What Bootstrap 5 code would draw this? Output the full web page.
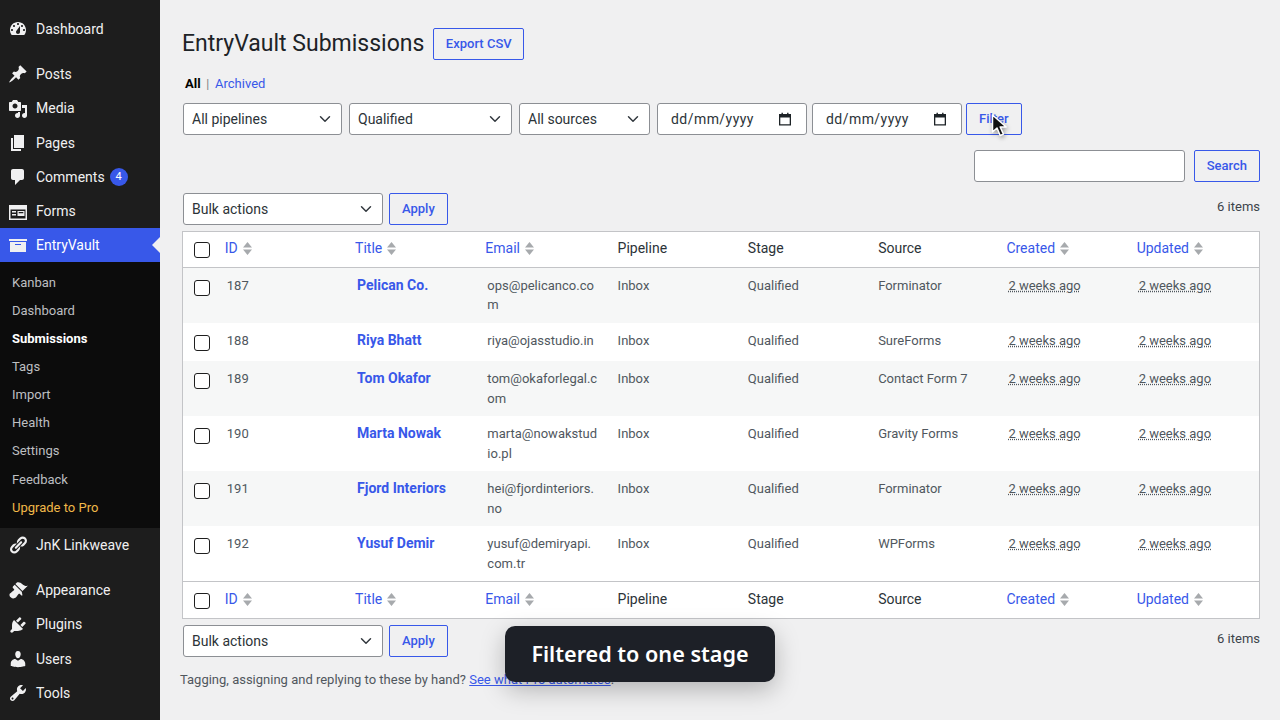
<!DOCTYPE html>
<html lang="en">
<head>
<meta charset="utf-8">
<title>EntryVault Submissions</title>
<link href="https://cdn.jsdelivr.net/npm/bootstrap@5.3.0/dist/css/bootstrap.min.css" rel="stylesheet">
<style>
html,body{height:720px;overflow:hidden}
body{background:#f0f0f1;font-family:Roboto,"Liberation Sans",sans-serif;font-size:13px;color:#3c434a}
.shell{height:720px}
.side{width:160px;flex:none;background:#1d1d1d;color:#f0f0f1;font-size:14px;padding-top:12px;height:720px;overflow:hidden}
.side ul{margin:0;padding:0;list-style:none}
.mitem{height:34.3px;display:flex;align-items:center;color:#f0f0f1;text-decoration:none;position:relative}
.mitem svg{width:20px;height:20px;margin:0 8px;flex:none;fill:#f0f0f1}
.mgap{margin-top:11px}
.mitem.on{background:#3858e9;color:#fff;height:34px;margin-top:-.5px}
.mitem.on::after{content:"";position:absolute;right:0;top:9px;border:8px solid transparent;border-right-color:#f0f0f1;border-left:0}
.cnt{display:inline-block;width:18px;height:18px;line-height:18px;border-radius:50%;background:#3858e9;color:#fff;font-size:11px;text-align:center;margin-left:5px}
.subm{background:#0c0c0c;padding:6.4px 0 6.2px}
.subm a{display:block;height:28.125px;line-height:28.125px;padding-left:12px;font-size:13px;color:#bdbfc1;text-decoration:none}
.subm a.cur{color:#fff;font-weight:700}
.subm a.pro{color:#f0b849}
.vault-main{padding:28px 20px 0;min-width:0}
.head-row{height:32px;margin-left:2px;gap:9px}
.head-row h1{font-size:23px;font-weight:400;margin:0;color:#1d2327;line-height:32px}
.vbtn{height:32px;padding:0 12px;font-size:13px;font-weight:500;color:#3858e9;border:1px solid #3858e9;background:transparent;border-radius:2px;line-height:30px;--bs-btn-hover-color:#3858e9}
.head-row .vbtn{padding:0 11.5px}
.sublinks{margin:14px 0 0 5px;height:20px;line-height:20px;color:#787c82}
.sublinks b{color:#000;font-weight:700}
.sublinks a{color:#3858e9;text-decoration:none}
.sublinks i{font-style:normal;margin:0 2.500px;font-size:12px}
.filters{margin:9px 0 0 3px;height:32px}
.vsel{height:32px;padding:0 24px 0 8px;font-size:14px;color:#2c3338;border:1px solid #8c8f94;border-radius:3px;background-color:#fff;background-position:right 9px center;background-size:14px 12px;line-height:30px}
.w-a{width:159px;margin-right:7px}
.w-b{width:163px;margin-right:7px}
.w-c{width:131px;margin-right:7px}
.vdate{width:150px;height:32px;background:#fff;border:1px solid #8c8f94;border-radius:3px;padding:0 14px 0 13px;color:#2c3338;font-size:14px;letter-spacing:.45px}
.vdate svg{width:14px;height:14px;fill:#1d2327}
.d1{margin-right:5px}
.d2{margin-right:4px}
.searchrow{margin-top:15px;height:32px}
.vinput{width:211px;height:32px;background:#fff;border:1px solid #8c8f94;border-radius:3px;margin-right:9px}
.bulkrow{margin:11px 0 0 3px;height:32px;gap:6px}
.bulkrow.lowrow{margin-top:6px}
.w-d{width:200px}
.count{padding-top:4px;line-height:20px;color:#3c434a}
.tablewrap{margin:6px 0 0 2px;width:1078px;border:1px solid #c3c4c7;background:#fff}
.vault-table{--bs-table-bg:#fff;--bs-table-color:#50575e;--bs-table-striped-bg:#f6f7f7;--bs-table-striped-color:#50575e;--bs-table-border-color:transparent;table-layout:fixed;width:1076px;margin:0;font-size:13px;line-height:19.5px}
.vault-table>:not(caption)>*>*{padding:8px 10px;border:0;vertical-align:top;overflow-wrap:break-word}
.vault-table thead th,.vault-table tfoot th{font-size:14px;font-weight:400;color:#2c3338;line-height:20px}
.vault-table>thead>tr>th{height:35px;padding-top:6px;padding-bottom:6px}
.vault-table>tfoot>tr>th{height:36.5px;padding-top:7px;padding-bottom:7.5px}
.vault-table thead th{border-bottom:1px solid #c3c4c7}
.vault-table tfoot th{border-top:1px solid #c3c4c7}
.vault-table>:not(caption)>*>th.sortcol{padding-left:8px;padding-right:8px}
.sortlink{color:#3858e9;text-decoration:none;display:inline-flex;align-items:center;gap:5px}
.sortlink svg{width:9px;height:13px;fill:#a7aaad;margin-top:1px}
.vault-table .chk{width:33.8px;padding:0 !important}
.vbox{display:block;width:16px;height:16px;margin:11.5px 0 0 11px;border:1px solid #1e1e1e;border-radius:3px;background:#fff;appearance:none}
tbody tr:nth-child(-n+2) .vbox{margin-top:12px}
tfoot .vbox{margin-top:11px}
thead .vbox{margin-top:10px}
.rname{font-size:14px;font-weight:700;color:#3858e9;text-decoration:none;line-height:19px}
.vault-table tbody td{color:#50575e}
.rowshort{height:38.5px}
abbr.stamp{color:#50575e;text-decoration:underline dotted;text-underline-offset:1px;cursor:default}
.note{margin-top:13px;line-height:19px;color:#50575e;margin-bottom:0}
.note a{color:#3858e9}
.vtoast{position:absolute;left:505px;top:626px;width:270px;height:56px;padding-top:1px;background:#1d2027;border-radius:10px;color:#fff;font-family:"Noto Sans",sans-serif;font-size:21.6px;font-weight:600;box-shadow:0 8px 24px rgba(0,0,0,.25)}
.vcursor{position:absolute;left:988px;top:110px;width:24px;height:30px;filter:drop-shadow(1px 2px 2px rgba(0,0,0,.35))}
</style>
</head>
<body>
<div class="d-flex shell">
  <aside class="side">
    <ul>
      <li><a class="mitem" href="#"><svg viewBox="0 0 20 20"><path fill-rule="evenodd" d="M3.76 16h12.48c1.1-1.37 1.76-3.11 1.76-5 0-4.42-3.58-8-8-8s-8 3.58-8 8c0 1.89.66 3.63 1.76 5zM10 4c.55 0 1 .45 1 1s-.45 1-1 1-1-.45-1-1 .45-1 1-1zM6 6c.55 0 1 .45 1 1s-.45 1-1 1-1-.45-1-1 .45-1 1-1zm8 0c.55 0 1 .45 1 1s-.45 1-1 1-1-.45-1-1 .45-1 1-1zm-5.37 5.55L12 7v6c0 1.1-.9 2-2 2s-2-.9-2-2c0-.57.24-1.08.63-1.45zM4 10c.55 0 1 .45 1 1s-.45 1-1 1-1-.45-1-1 .45-1 1-1zm12 0c.55 0 1 .45 1 1s-.45 1-1 1-1-.45-1-1 .45-1 1-1z"/></svg>Dashboard</a></li>
      <li class="mgap"><a class="mitem" href="#"><svg viewBox="0 0 20 20"><path d="M10.44 3.02l1.82-1.82 6.36 6.35-1.83 1.82c-1.05-.68-2.48-.57-3.41.36l-.75.75c-.92.93-1.04 2.35-.35 3.41l-1.83 1.82-2.41-2.41-2.8 2.79c-.42.42-3.38 2.71-3.8 2.29s1.86-3.39 2.28-3.81l2.79-2.79L4.1 9.36l1.83-1.82c1.05.69 2.48.57 3.4-.36l.75-.75c.93-.92 1.05-2.35.36-3.41z"/></svg>Posts</a></li>
      <li><a class="mitem" href="#"><svg viewBox="0 0 20 20"><path d="M13 11V4c0-.55-.45-1-1-1h-1.67L9 1H5L3.67 3H2c-.55 0-1 .45-1 1v7c0 .55.45 1 1 1h10c.55 0 1-.45 1-1zM7 4.5c1.38 0 2.5 1.12 2.5 2.5S8.38 9.5 7 9.5 4.5 8.38 4.5 7 5.62 4.5 7 4.5zM14 6h5v10.5c0 1.38-1.12 2.5-2.5 2.5S14 17.88 14 16.5s1.12-2.5 2.5-2.5c.17 0 .34.02.5.05V9h-3V6zm-4 8.05V13h2v3.5c0 1.38-1.12 2.5-2.5 2.5S7 17.88 7 16.5 8.12 14 9.5 14c.17 0 .34.02.5.05z" fill-rule="evenodd"/></svg>Media</a></li>
      <li><a class="mitem" href="#"><svg viewBox="0 0 20 20"><path d="M6 15V2h10v13H6zm-1 1h8v2H3V5h2v11z"/></svg>Pages</a></li>
      <li><a class="mitem" href="#"><svg viewBox="0 0 20 20"><path d="M5 2h9c1.1 0 2 .9 2 2v7c0 1.1-.9 2-2 2h-2l-5 5v-5H5c-1.1 0-2-.9-2-2V4c0-1.1.9-2 2-2z"/></svg>Comments<span class="cnt">4</span></a></li>
      <li><a class="mitem" href="#"><svg viewBox="0 0 20 20"><path fill-rule="evenodd" d="M1 3h18v15H1V3zm1.5 4.500v9h15v-9h-15zM4 9h4v1.400H4V9zm0 3h4v1.400H4V12zm5.500-3h7v5h-7V9zm1.200 1.100v1.100h4.600v-1.100h-4.600z"/></svg>Forms</a></li>
      <li><a class="mitem on" href="#"><svg viewBox="0 0 20 20"><path fill-rule="evenodd" d="M19 4v2H1V4h18zM2 7h16v10H2V7zm11 3V9H7v1h6z"/></svg>EntryVault</a>
        <div class="subm">
          <a href="#">Kanban</a><a href="#">Dashboard</a><a href="#" class="cur">Submissions</a><a href="#">Tags</a><a href="#">Import</a><a href="#">Health</a><a href="#">Settings</a><a href="#">Feedback</a><a href="#" class="pro">Upgrade to Pro</a>
        </div>
      </li>
      <li><a class="mitem" href="#"><svg viewBox="0 0 20 20"><path d="M17.74 2.76c1.68 1.69 1.68 4.41 0 6.1l-1.53 1.52c-1.12 1.12-2.7 1.47-4.14 1.09l2.62-2.61.76-.77.76-.76c.84-.84.84-2.2 0-3.04-.84-.85-2.2-.85-3.04 0l-.77.76-3.38 3.38c-.37-1.44-.02-3.02 1.1-4.14l1.52-1.53c1.69-1.68 4.42-1.68 6.1 0zM8.59 13.43l5.34-5.34c.42-.42.42-1.1 0-1.52-.44-.43-1.13-.39-1.53 0l-5.33 5.34c-.42.42-.42 1.1 0 1.52.44.43 1.13.39 1.52 0zm-.76 2.29l4.14-4.15c.38 1.44.03 3.02-1.09 4.14l-1.52 1.53c-1.69 1.68-4.41 1.68-6.1 0-1.68-1.68-1.68-4.42 0-6.1l1.53-1.52c1.12-1.12 2.7-1.47 4.14-1.1l-4.14 4.15c-.85.84-.85 2.2 0 3.05.84.84 2.2.84 3.04 0z"/></svg>JnK Linkweave</a></li>
      <li class="mgap"><a class="mitem" href="#"><svg viewBox="0 0 20 20"><path d="M14.48 11.06L7.41 3.99l1.5-1.5c.5-.56 2.3-.47 3.51.32 1.21.8 1.43 1.28 2.91 2.1 1.18.64 2.45 1.26 4.45.85zm-.71.71L6.7 4.7 4.93 6.47c-.39.39-.39 1.02 0 1.41l1.06 1.06c.39.39.39 1.03 0 1.42-.6.6-1.43 1.11-2.21 1.69-.35.26-.7.53-1.01.84C1.43 13.23.78 15.3 2.7 17.3c1.94 1.91 4 1.25 5.34.01.31-.31.59-.65.84-1.01.58-.78 1.09-1.61 1.69-2.21.39-.39 1.02-.39 1.41 0l1.06 1.06c.39.39 1.02.39 1.41 0z"/></svg>Appearance</a></li>
      <li><a class="mitem" href="#"><svg viewBox="0 0 20 20"><path d="M13.11 4.36L9.87 7.6 8 5.73l3.24-3.24c.35-.34 1.05-.2 1.56.32.52.51.66 1.21.31 1.55zm-8 1.77l.91-1.12 9.01 9.01-1.19.84c-.71.71-2.63 1.16-3.82 1.16H6.14L4.9 17.26c-.59.59-1.54.59-2.12 0-.59-.58-.59-1.53 0-2.12l1.24-1.24v-3.88c0-1.13.4-3.19 1.09-3.89zm7.26 3.97l3.24-3.24c.34-.35 1.04-.21 1.55.31.52.51.66 1.21.31 1.55l-3.24 3.25z"/></svg>Plugins</a></li>
      <li><a class="mitem" href="#"><svg viewBox="0 0 20 20"><path d="M10 9.25c-2.27 0-2.73-3.44-2.73-3.44C7 4.02 7.82 2 9.97 2c2.16 0 2.98 2.02 2.71 3.81 0 0-.41 3.44-2.68 3.44zm0 2.57L12.72 10c2.39 0 4.52 2.33 4.52 4.53v2.49s-3.65 1.13-7.24 1.13c-3.65 0-7.24-1.13-7.24-1.13v-2.49c0-2.25 1.94-4.48 4.47-4.48z"/></svg>Users</a></li>
      <li><a class="mitem" href="#"><svg viewBox="0 0 20 20"><path d="M16.68 9.77c-1.34 1.34-3.3 1.67-4.95.99l-5.41 6.52c-.99.99-2.59.99-3.58 0s-.99-2.59 0-3.57l6.52-5.42c-.68-1.65-.35-3.61.99-4.95 1.28-1.28 3.12-1.62 4.72-1.06l-2.89 2.89 2.82 2.82 2.86-2.87c.53 1.58.18 3.39-1.08 4.65zM3.81 16.21c.4.39 1.04.39 1.43 0 .4-.4.4-1.04 0-1.43-.39-.4-1.03-.4-1.43 0-.39.39-.39 1.03 0 1.43z" fill-rule="evenodd"/></svg>Tools</a></li>
    </ul>
  </aside>

  <main class="vault-main flex-grow-1">
    <div class="d-flex align-items-center head-row">
      <h1>EntryVault Submissions</h1>
      <a class="btn vbtn" href="#">Export CSV</a>
    </div>
    <div class="sublinks"><b>All</b> <i>|</i> <a href="#">Archived</a></div>
    <div class="d-flex filters">
      <select class="form-select vsel w-a"><option>All pipelines</option></select>
      <select class="form-select vsel w-b"><option>Qualified</option></select>
      <select class="form-select vsel w-c"><option>All sources</option></select>
      <div class="vdate d1 d-flex align-items-center justify-content-between"><span>dd/mm/yyyy</span><svg viewBox="0 0 14 14"><path fill-rule="evenodd" d="M1 2h2.500V.8h1.400V2h4.200V.8h1.400V2H13v11.500H1V2zm1.300 3.400v6.800h9.400V5.400H2.300z"/></svg></div>
      <div class="vdate d2 d-flex align-items-center justify-content-between"><span>dd/mm/yyyy</span><svg viewBox="0 0 14 14"><path fill-rule="evenodd" d="M1 2h2.500V.8h1.400V2h4.200V.8h1.400V2H13v11.500H1V2zm1.300 3.400v6.800h9.400V5.400H2.300z"/></svg></div>
      <button class="btn vbtn" type="button">Filter</button>
    </div>
    <div class="d-flex justify-content-end searchrow">
      <div class="vinput"></div>
      <button class="btn vbtn" type="button">Search</button>
    </div>
    <div class="d-flex justify-content-between bulkrow">
      <div class="d-flex bulkrow mt-0 ms-0">
        <select class="form-select vsel w-d"><option>Bulk actions</option></select>
        <button class="btn vbtn" type="button">Apply</button>
      </div>
      <div class="count">6 items</div>
    </div>
    <div class="tablewrap">
      <table class="table table-striped vault-table">
        <thead>
          <tr>
            <th class="chk"><input class="vbox" type="checkbox" aria-label="Select all"></th>
            <th class="sortcol"><a class="sortlink" href="#">ID <svg viewBox="0 0 9 13"><path d="M4.500 0L9 5.500H0zM0 7.500h9L4.500 13z"/></svg></a></th>
            <th class="sortcol"><a class="sortlink" href="#">Title <svg viewBox="0 0 9 13"><path d="M4.500 0L9 5.500H0zM0 7.500h9L4.500 13z"/></svg></a></th>
            <th class="sortcol"><a class="sortlink" href="#">Email <svg viewBox="0 0 9 13"><path d="M4.500 0L9 5.500H0zM0 7.500h9L4.500 13z"/></svg></a></th>
            <th>Pipeline</th><th>Stage</th><th>Source</th>
            <th class="sortcol"><a class="sortlink" href="#">Created <svg viewBox="0 0 9 13"><path d="M4.500 0L9 5.500H0zM0 7.500h9L4.500 13z"/></svg></a></th>
            <th class="sortcol"><a class="sortlink" href="#">Updated <svg viewBox="0 0 9 13"><path d="M4.500 0L9 5.500H0zM0 7.500h9L4.500 13z"/></svg></a></th>
          </tr>
        </thead>
        <tbody>
          <tr><td class="chk"><input class="vbox" type="checkbox" aria-label="Select"></td><td>187</td><td><a class="rname" href="#">Pelican Co.</a></td><td>ops@pelicanco.com</td><td>Inbox</td><td>Qualified</td><td>Forminator</td><td><abbr class="stamp">2 weeks ago</abbr></td><td><abbr class="stamp">2 weeks ago</abbr></td></tr>
          <tr class="rowshort"><td class="chk"><input class="vbox" type="checkbox" aria-label="Select"></td><td>188</td><td><a class="rname" href="#">Riya Bhatt</a></td><td>riya@ojasstudio.in</td><td>Inbox</td><td>Qualified</td><td>SureForms</td><td><abbr class="stamp">2 weeks ago</abbr></td><td><abbr class="stamp">2 weeks ago</abbr></td></tr>
          <tr><td class="chk"><input class="vbox" type="checkbox" aria-label="Select"></td><td>189</td><td><a class="rname" href="#">Tom Okafor</a></td><td>tom@okaforlegal.com</td><td>Inbox</td><td>Qualified</td><td>Contact Form 7</td><td><abbr class="stamp">2 weeks ago</abbr></td><td><abbr class="stamp">2 weeks ago</abbr></td></tr>
          <tr><td class="chk"><input class="vbox" type="checkbox" aria-label="Select"></td><td>190</td><td><a class="rname" href="#">Marta Nowak</a></td><td>marta@nowakstudio.pl</td><td>Inbox</td><td>Qualified</td><td>Gravity Forms</td><td><abbr class="stamp">2 weeks ago</abbr></td><td><abbr class="stamp">2 weeks ago</abbr></td></tr>
          <tr><td class="chk"><input class="vbox" type="checkbox" aria-label="Select"></td><td>191</td><td><a class="rname" href="#">Fjord Interiors</a></td><td>hei@fjordinteriors.no</td><td>Inbox</td><td>Qualified</td><td>Forminator</td><td><abbr class="stamp">2 weeks ago</abbr></td><td><abbr class="stamp">2 weeks ago</abbr></td></tr>
          <tr><td class="chk"><input class="vbox" type="checkbox" aria-label="Select"></td><td>192</td><td><a class="rname" href="#">Yusuf Demir</a></td><td>yusuf@demiryapi.com.tr</td><td>Inbox</td><td>Qualified</td><td>WPForms</td><td><abbr class="stamp">2 weeks ago</abbr></td><td><abbr class="stamp">2 weeks ago</abbr></td></tr>
        </tbody>
        <tfoot>
          <tr>
            <th class="chk"><input class="vbox" type="checkbox" aria-label="Select all"></th>
            <th class="sortcol"><a class="sortlink" href="#">ID <svg viewBox="0 0 9 13"><path d="M4.500 0L9 5.500H0zM0 7.500h9L4.500 13z"/></svg></a></th>
            <th class="sortcol"><a class="sortlink" href="#">Title <svg viewBox="0 0 9 13"><path d="M4.500 0L9 5.500H0zM0 7.500h9L4.500 13z"/></svg></a></th>
            <th class="sortcol"><a class="sortlink" href="#">Email <svg viewBox="0 0 9 13"><path d="M4.500 0L9 5.500H0zM0 7.500h9L4.500 13z"/></svg></a></th>
            <th>Pipeline</th><th>Stage</th><th>Source</th>
            <th class="sortcol"><a class="sortlink" href="#">Created <svg viewBox="0 0 9 13"><path d="M4.500 0L9 5.500H0zM0 7.500h9L4.500 13z"/></svg></a></th>
            <th class="sortcol"><a class="sortlink" href="#">Updated <svg viewBox="0 0 9 13"><path d="M4.500 0L9 5.500H0zM0 7.500h9L4.500 13z"/></svg></a></th>
          </tr>
        </tfoot>
      </table>
    </div>
    <div class="d-flex justify-content-between bulkrow lowrow">
      <div class="d-flex bulkrow mt-0 ms-0">
        <select class="form-select vsel w-d"><option>Bulk actions</option></select>
        <button class="btn vbtn" type="button">Apply</button>
      </div>
      <div class="count">6 items</div>
    </div>
    <p class="note">Tagging, assigning and replying to these by hand? <a href="#">See what Pro automates</a>.</p>
  </main>
</div>
<div class="vtoast d-flex align-items-center justify-content-center">Filtered to one stage</div>
<svg class="vcursor" viewBox="0 0 24 30"><path d="M4.500 5v17l4.500-4 3.200 7.500 3.200-1.400-3.200-7.100h6z" fill="#111" stroke="#fff" stroke-width="1.500" stroke-linejoin="round"/></svg>
<script src="https://cdn.jsdelivr.net/npm/bootstrap@5.3.0/dist/js/bootstrap.bundle.min.js"></script>
</body>
</html>
